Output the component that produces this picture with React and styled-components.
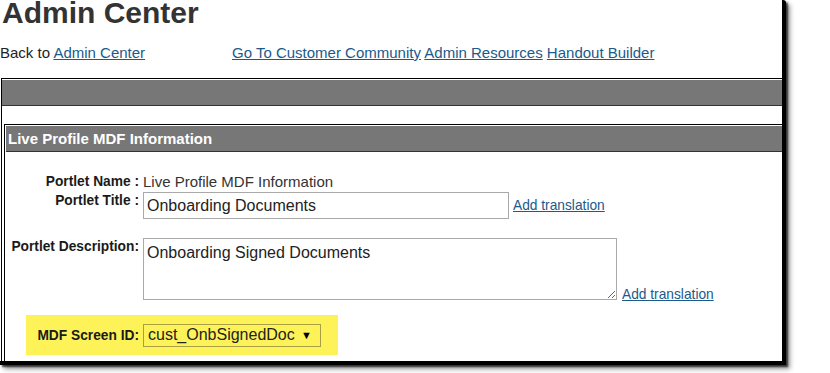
import React from "react"
import styled, { createGlobalStyle } from "styled-components"

const GlobalStyle = createGlobalStyle`
  html, body {
    margin: 0;
    background: #fff;
    font-family: "Liberation Sans", Arial, sans-serif;
  }
`

const linkColor = "#1b5a8a"

const Page = styled.div`
  width: 830px;
  height: 373px;
  display: flex;
  align-items: flex-start;
`

const Frame = styled.div`
  flex: 0 0 auto;
  box-sizing: border-box;
  width: 786px;
  height: 365px;
  background: #fff;
  display: flex;
  flex-direction: column;
  border-right: 4px solid #000;
  border-bottom: 4px solid #000;
  border-top-right-radius: 3px;
  box-shadow: 2px 2px 2px rgba(0, 0, 0, 0.7), 4px 4px 5px rgba(0, 0, 0, 0.4);
`

const Title = styled.h1`
  margin: -2px 0 0 2px;
  font-size: 30px;
  line-height: 30px;
  font-weight: bold;
  color: #333;
`

const NavRow = styled.div`
  margin-top: 16px;
  display: flex;
  font-size: 15px;
  line-height: 18px;
  color: #222;
`

const NavCell = styled.div`
  width: ${(p) => (p.width ? `${p.width}px` : "auto")};
`

const TextLink = styled.a`
  color: ${linkColor};
  text-decoration: underline;
  font-size: ${(p) => p.size || 15}px;
  cursor: pointer;
`

const OuterBox = styled.div`
  margin: 16px 0 0 1px;
  border-left: 1px solid #000;
  border-top: 1px solid #000;
  padding-top: 1px;
  flex: 1;
  display: flex;
  flex-direction: column;
`

const GrayBar = styled.div`
  height: 25px;
  background: #777;
  border-bottom: 1px solid #333;
`

const InnerBox = styled.div`
  margin: 18px 0 0 2px;
  border-left: 1px solid #000;
  border-top: 1px solid #000;
  padding-top: 1px;
  flex: 1;
  display: flex;
  flex-direction: column;
`

const SectionHeader = styled.div`
  margin-left: 1px;
  height: 25px;
  line-height: 25px;
  padding-left: 2px;
  background: #777;
  border-bottom: 1px solid #333;
  color: #fff;
  font-size: 15px;
  font-weight: bold;
`

const Form = styled.div`
  padding-top: 21px;
`

const FieldRow = styled.div`
  display: grid;
  grid-template-columns: 134px auto;
  column-gap: 4px;
  margin-top: ${(p) => p.gap || 0}px;
`

const Label = styled.div`
  text-align: right;
  font-size: 13.75px;
  font-weight: bold;
  line-height: 17px;
  color: #1a1a1a;
  white-space: nowrap;
`

const Value = styled.div`
  font-size: 15px;
  line-height: 17px;
  color: #333;
`

const FieldCell = styled.div`
  display: flex;
  align-items: ${(p) => p.align || "center"};
  gap: ${(p) => p.gap || 4}px;
`

const TextInput = styled.input`
  box-sizing: border-box;
  width: 366px;
  height: 27px;
  border: 1px solid #a9a9a9;
  padding: 0 3px;
  font-family: inherit;
  font-size: 16px;
  color: #222;
  outline: none;
`

const TextArea = styled.textarea`
  box-sizing: border-box;
  width: 474px;
  height: 62px;
  border: 1px solid #a9a9a9;
  padding: 5px 3px;
  font-family: inherit;
  font-size: 16px;
  line-height: 18px;
  color: #222;
  outline: none;
  display: block;
`

const BottomLink = styled(TextLink)`
  line-height: 14px;
  margin-bottom: -2px;
`

const Highlight = styled.div`
  display: flex;
  align-items: center;
  gap: 4px;
  margin: 15px 0 0 21px;
  width: 312px;
  height: 40px;
  background: #fdf359;
`

const HighlightLabel = styled(Label)`
  width: 113px;
`

const SelectBox = styled.div`
  box-sizing: border-box;
  width: 178px;
  height: 23px;
  border: 1px solid #a8a040;
  padding: 0 8px 0 4px;
  display: flex;
  align-items: center;
  justify-content: space-between;
  font-size: 16px;
  color: #222;
`

const Arrow = styled.span`
  font-size: 11px;
  color: #000;
`

export default function App() {
  return (
    <>
      <GlobalStyle />
      <Page>
        <Frame>
          <Title>Admin Center</Title>
          <NavRow>
            <NavCell width={232}>
              Back to <TextLink>Admin Center</TextLink>
            </NavCell>
            <NavCell>
              <TextLink>Go To Customer Community</TextLink>{" "}
              <TextLink>Admin Resources</TextLink>{" "}
              <TextLink>Handout Builder</TextLink>
            </NavCell>
          </NavRow>
          <OuterBox>
            <GrayBar />
            <InnerBox>
              <SectionHeader>Live Profile MDF Information</SectionHeader>
              <Form>
                <FieldRow>
                  <Label>Portlet Name :</Label>
                  <Value>Live Profile MDF Information</Value>
                </FieldRow>
                <FieldRow gap={2}>
                  <Label>Portlet Title :</Label>
                  <FieldCell>
                    <TextInput defaultValue="Onboarding Documents" />
                    <TextLink size={13.75}>Add translation</TextLink>
                  </FieldCell>
                </FieldRow>
                <FieldRow gap={19}>
                  <Label>Portlet Description:</Label>
                  <FieldCell align="flex-end" gap={5}>
                    <TextArea defaultValue="Onboarding Signed Documents" />
                    <BottomLink size={13.75}>Add translation</BottomLink>
                  </FieldCell>
                </FieldRow>
                <Highlight>
                  <HighlightLabel>MDF Screen ID:</HighlightLabel>
                  <SelectBox>
                    <span>cust_OnbSignedDoc</span>
                    <Arrow>▼</Arrow>
                  </SelectBox>
                </Highlight>
              </Form>
            </InnerBox>
          </OuterBox>
        </Frame>
      </Page>
    </>
  )
}
